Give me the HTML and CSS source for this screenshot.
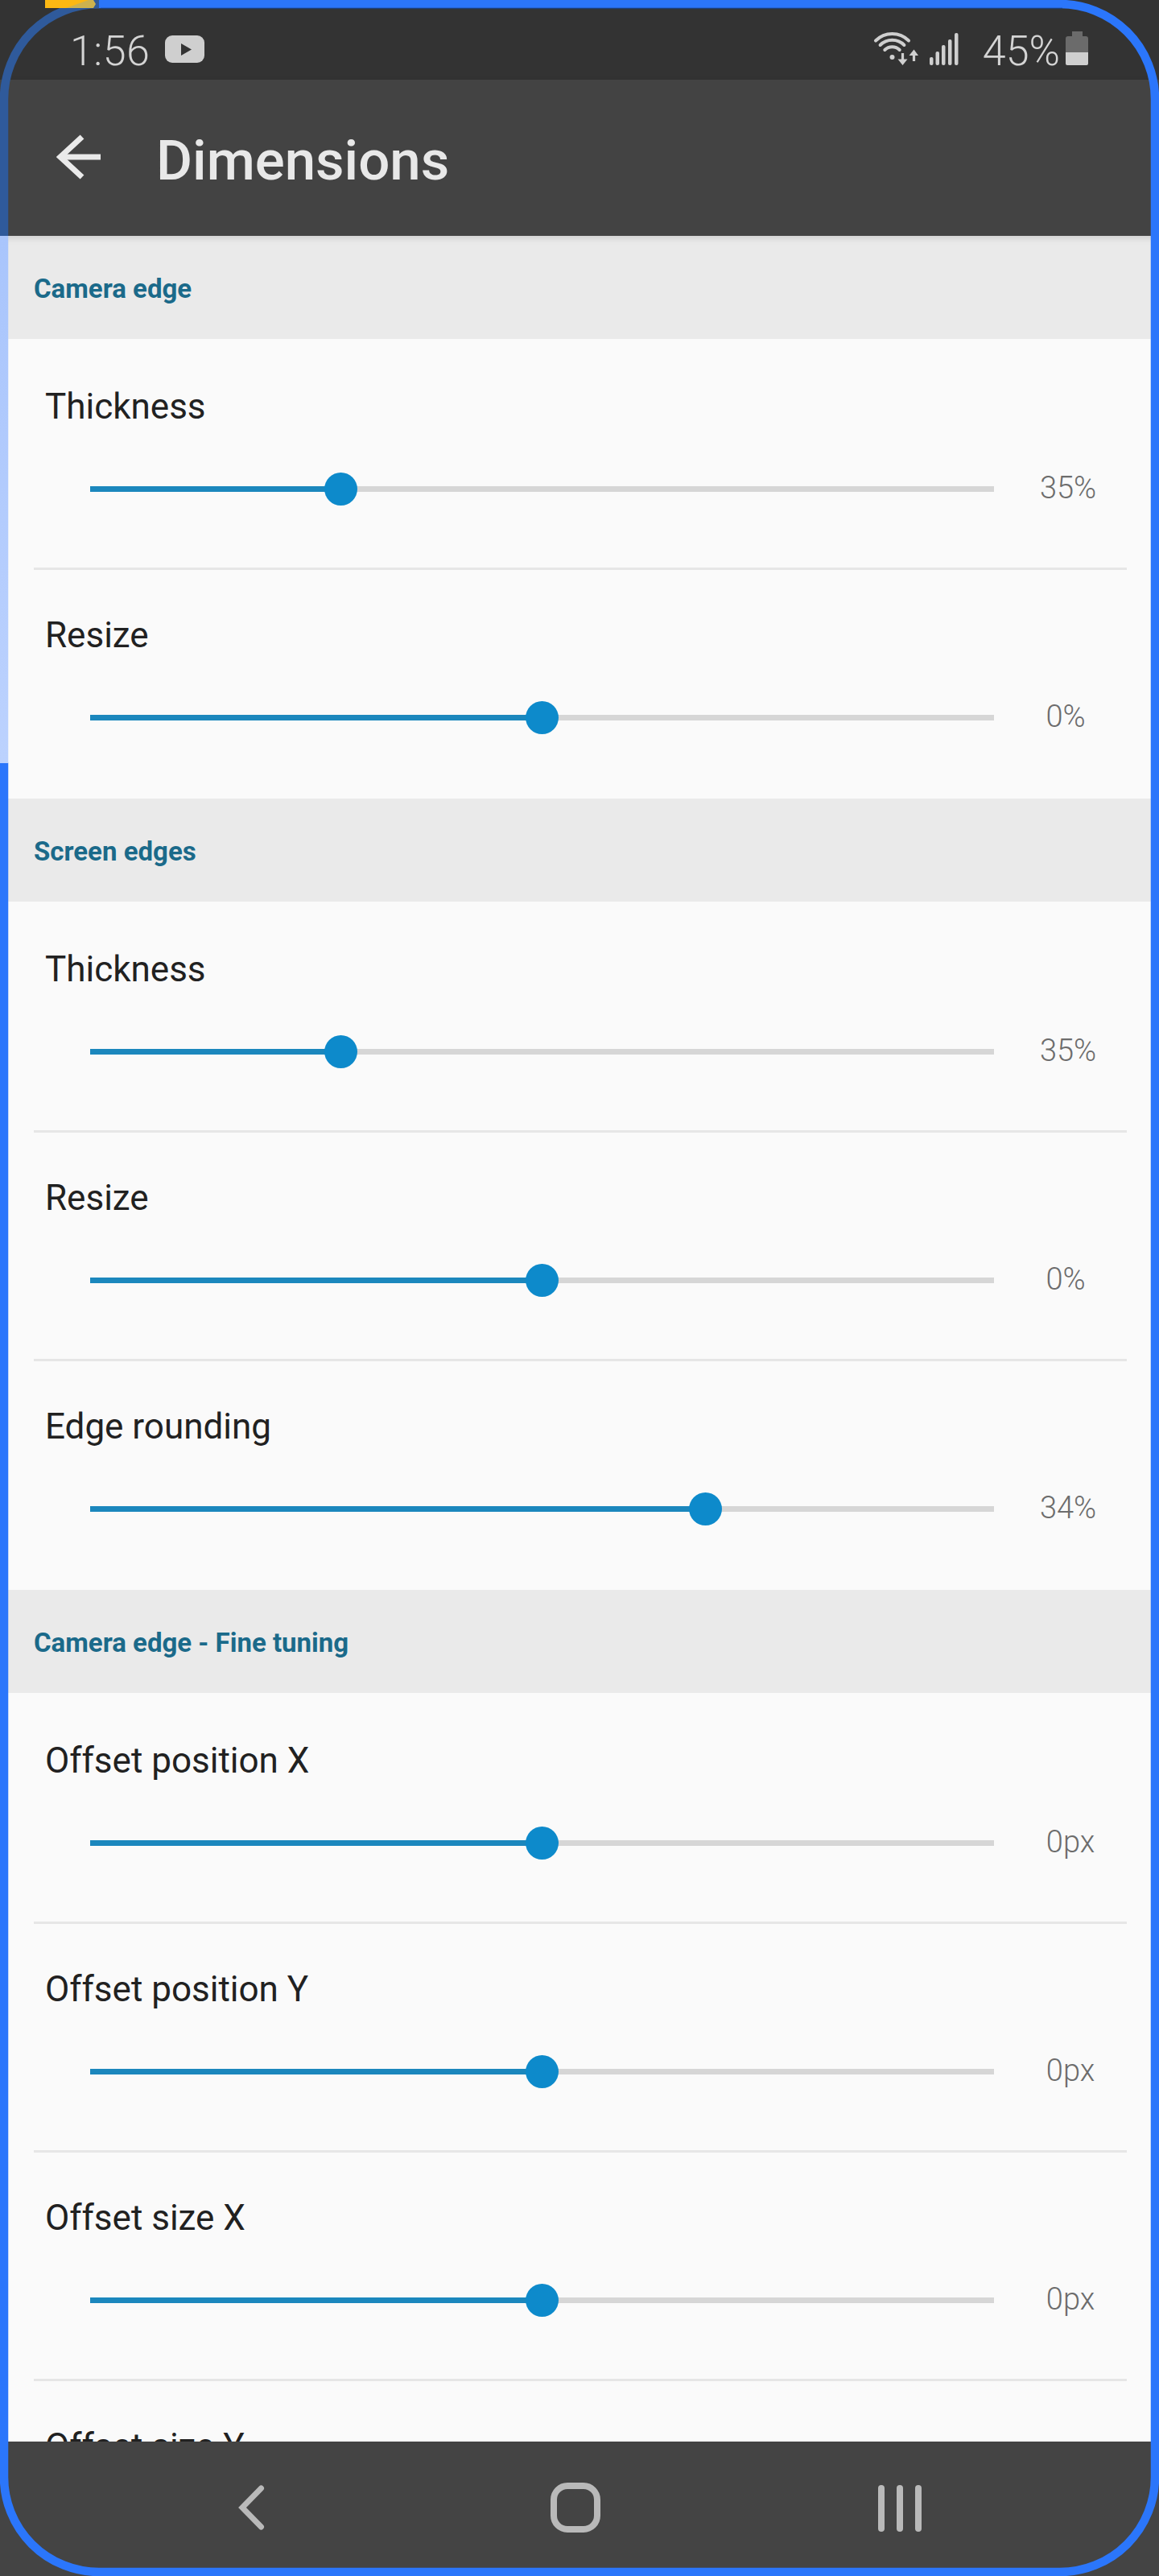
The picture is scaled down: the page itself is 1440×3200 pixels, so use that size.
FILE: index.html
```html
<!DOCTYPE html>
<html lang="en">
<head>
<meta charset="utf-8">
<title>Dimensions</title>
<link rel="stylesheet" href="styles.css">
</head>
<body>
<div class="screen">
  <header class="status">
    <div class="status-left">
      <span class="time">1:56</span>
      <svg class="yt" viewBox="0 0 49 34"><rect width="49" height="34" rx="9" fill="#cfcfcf"/><path d="M20 10 L33 17.5 L20 25 Z" fill="#333"/></svg>
    </div>
    <div class="status-right">
      <svg class="wifi" viewBox="0 0 56 44" fill="none" stroke="#cfcfcf">
        <g stroke-width="4" stroke-linecap="round">
          <path d="M3 12.5 A29 29 0 0 1 44 12.5"/>
          <path d="M8.6 18 A21 21 0 0 1 38.4 18"/>
          <path d="M14.3 24 A13 13 0 0 1 32.7 24"/>
        </g>
        <circle cx="23.5" cy="33" r="3" fill="#cfcfcf" stroke="none"/>
        <g stroke-width="3.2">
          <path d="M36.5 28 V38"/>
          <path d="M50.5 28 V38"/>
        </g>
        <path d="M30.5 35.5 H42.5 L36.5 43 Z M44.5 31 H56 L50.5 23.5 Z" fill="#cfcfcf" stroke="none"/>
      </svg>
      <svg class="signal" viewBox="0 0 36 40" fill="#cfcfcf">
        <rect x="0" y="30" width="4.5" height="10" rx="2"/>
        <rect x="7.5" y="23" width="4.5" height="17" rx="2"/>
        <rect x="15" y="15" width="4.5" height="25" rx="2"/>
        <rect x="23" y="8" width="4.5" height="32" rx="2"/>
        <rect x="31" y="0" width="4.5" height="40" rx="2"/>
      </svg>
      <span class="pct">45%</span>
      <svg class="battery" viewBox="0 0 28 42"><path d="M8 0 H21 V6 H25 Q28 6 28 9 V26 H0 V9 Q0 6 3 6 H8 Z" fill="#6b6b6b"/><path d="M0 26 H28 V40 Q28 42 26 42 H2 Q0 42 0 40 Z" fill="#cfcfcf"/></svg>
    </div>
  </header>

  <div class="toolbar">
    <svg class="back" viewBox="0 0 56 56" fill="none" stroke="#eaeaea" stroke-width="7"><path d="M32 3 L5 28 L32 53"/><path d="M5 28 H55"/></svg>
    <h1 class="title">Dimensions</h1>
  </div>

  <main class="list">
    <h2 class="head">Camera edge</h2>
    <section class="row">
      <div class="label">Thickness</div>
      <div class="control"><div class="track"><div class="fill" style="width:27.8%"><span class="thumb"></span></div></div><span class="value">35%</span></div>
    </section>
    <section class="row row-end">
      <div class="label">Resize</div>
      <div class="control"><div class="track"><div class="fill" style="width:50%"><span class="thumb"></span></div></div><span class="value value-pct">0%</span></div>
    </section>

    <h2 class="head">Screen edges</h2>
    <section class="row">
      <div class="label">Thickness</div>
      <div class="control"><div class="track"><div class="fill" style="width:27.8%"><span class="thumb"></span></div></div><span class="value">35%</span></div>
    </section>
    <section class="row">
      <div class="label">Resize</div>
      <div class="control"><div class="track"><div class="fill" style="width:50%"><span class="thumb"></span></div></div><span class="value value-pct">0%</span></div>
    </section>
    <section class="row row-end">
      <div class="label">Edge rounding</div>
      <div class="control"><div class="track"><div class="fill" style="width:68.1%"><span class="thumb"></span></div></div><span class="value">34%</span></div>
    </section>

    <h2 class="head">Camera edge - Fine tuning</h2>
    <section class="row">
      <div class="label">Offset position X</div>
      <div class="control"><div class="track"><div class="fill" style="width:50%"><span class="thumb"></span></div></div><span class="value value-px">0px</span></div>
    </section>
    <section class="row">
      <div class="label">Offset position Y</div>
      <div class="control"><div class="track"><div class="fill" style="width:50%"><span class="thumb"></span></div></div><span class="value value-px">0px</span></div>
    </section>
    <section class="row">
      <div class="label">Offset size X</div>
      <div class="control"><div class="track"><div class="fill" style="width:50%"><span class="thumb"></span></div></div><span class="value value-px">0px</span></div>
    </section>
    <section class="row">
      <div class="label">Offset size Y</div>
      <div class="control"><div class="track"><div class="fill" style="width:50%"><span class="thumb"></span></div></div><span class="value value-px">0px</span></div>
    </section>
  </main>

  <nav class="nav">
    <svg class="nav-back" viewBox="0 0 40 60" fill="none" stroke="#b9b9b9" stroke-width="7" stroke-linecap="round"><path d="M32.5 7 L9 31 L32.5 55"/></svg>
    <svg class="nav-home" viewBox="0 0 62 62" fill="none" stroke="#b9b9b9" stroke-width="8"><rect x="4" y="4" width="54" height="54" rx="17"/></svg>
    <svg class="nav-recent" viewBox="0 0 54 58" fill="#b9b9b9"><rect x="0" y="0" width="8" height="58" rx="4"/><rect x="23" y="0" width="8" height="58" rx="4"/><rect x="46" y="0" width="8" height="58" rx="4"/></svg>
  </nav>

  <svg class="frame" viewBox="0 0 1440 3200" fill="none">
    <defs>
      <linearGradient id="thumbTrack" gradientUnits="userSpaceOnUse" x1="0" y1="293" x2="0" y2="948">
        <stop offset="0" stop-color="#a9c5fc"/>
        <stop offset="1" stop-color="#bcd2fe"/>
      </linearGradient>
    </defs>
    <path d="M5 948 V3077 A118 118 0 0 0 123 3195 H1317 A118 118 0 0 0 1435 3077 V123 A118 118 0 0 0 1317 5 H118" stroke="#2b76fb" stroke-width="10.5" stroke-linecap="round"/>
    <path d="M125 10.5 H1320" stroke="#1d3f78" stroke-width="1.5"/>
    <path d="M5 293 V948" stroke="url(#thumbTrack)" stroke-width="10.5"/>
    <path d="M5 293 V123 A118 118 0 0 1 123 5" stroke="#2f5a9b" stroke-width="10.5"/>
    <path d="M56 0 H116 L119 5 L116 10 H56 Z" fill="#cdb24e"/>
    <path d="M56 0 H110 L82 10 H56 Z" fill="#fcb813"/>
  </svg>
</div>
</body>
</html>
```
FILE: styles.css
```css
* { box-sizing: border-box; }
html, body { margin: 0; padding: 0; background: #444; }
body { font-family: "Roboto", "Liberation Sans", sans-serif; }

.screen {
  position: relative;
  width: 1440px;
  height: 3200px;
  display: flex;
  flex-direction: column;
  overflow: hidden;
}

/* status bar */
.status {
  height: 99px;
  flex: none;
  background: #333;
  display: flex;
  align-items: flex-start;
  justify-content: space-between;
  padding: 0 88px 0 87px;
  color: #d4d4d4;
}
.status-left { display: flex; align-items: flex-start; }
.time, .pct {
  font-size: 52px;
  font-weight: 300;
  line-height: 59px;
  padding-top: 34px;
  display: block;
  height: 93px;
}
.time { letter-spacing: .5px; }
.yt { width: 49px; height: 34px; margin: 44px 0 0 19px; }
.status-right { display: flex; align-items: flex-start; }
.wifi { width: 56px; height: 44px; margin-top: 38px; }
.signal { width: 36px; height: 40px; margin: 41px 30px 0 14px; }
.battery { width: 28px; height: 42px; margin: 39px 0 0 7px; }

/* toolbar */
.toolbar {
  height: 194px;
  flex: none;
  background: #434343;
  display: flex;
  align-items: center;
  padding-left: 70px;
  box-shadow: 0 3px 8px rgba(0, 0, 0, .12);
  position: relative;
  z-index: 1;
}
.back { width: 56px; height: 56px; margin-right: 68px; margin-top: -2px; }
.title {
  margin: 7px 0 0;
  font-size: 69px;
  font-weight: 500;
  color: #e8e8e8;
  line-height: 80px;
}

/* settings list */
.list {
  flex: 1;
  min-height: 0;
  overflow: hidden;
  background: #fafafa;
}
.head {
  margin: 0 0 3px;
  height: 128px;
  padding-left: 42px;
  background: #eaeaea;
  color: #1b6a8a;
  font-size: 33px;
  font-weight: 700;
  line-height: 132px;
}
.row {
  height: 284px;
  padding-top: 49px;
  background: linear-gradient(#e6e6e6, #e6e6e6) 42px 100% / 1358px 3px no-repeat;
}
.row-end { background: none; }
.label {
  font-size: 44px;
  line-height: 64px;
  color: #212121;
  padding-left: 56px;
}
.control {
  display: flex;
  align-items: center;
  padding-left: 112px;
  margin-top: 49px;
}
.track {
  width: 1123px;
  height: 7px;
  background: #d6d6d6;
  flex: none;
}
.fill { height: 100%; background: #1b87bd; position: relative; }
.thumb {
  position: absolute;
  right: -20px;
  top: -17px;
  width: 41px;
  height: 41px;
  border-radius: 50%;
  background: #0d8acb;
}
.value {
  width: 184px;
  text-align: center;
  font-size: 38px;
  font-weight: 300;
  color: #6c6c6c;
  line-height: 44px;
  margin-top: -2px;
}
.value-pct { padding-right: 6px; }
.value-px { padding-left: 6px; }

/* navigation bar */
.nav {
  height: 167px;
  flex: none;
  background: #444;
  display: grid;
  grid-template-columns: repeat(3, 403px);
  padding: 51px 0 0 110px;
  justify-items: center;
  align-items: start;
  position: relative;
}
.nav-back { width: 40px; height: 60px; }
.nav-home { width: 62px; height: 62px; }
.nav-recent { width: 54px; height: 58px; margin-top: 3px; }

/* phone edge lighting overlay */
.frame {
  position: absolute;
  left: 0;
  top: 0;
  width: 1440px;
  height: 3200px;
  pointer-events: none;
  z-index: 2;
}
```
